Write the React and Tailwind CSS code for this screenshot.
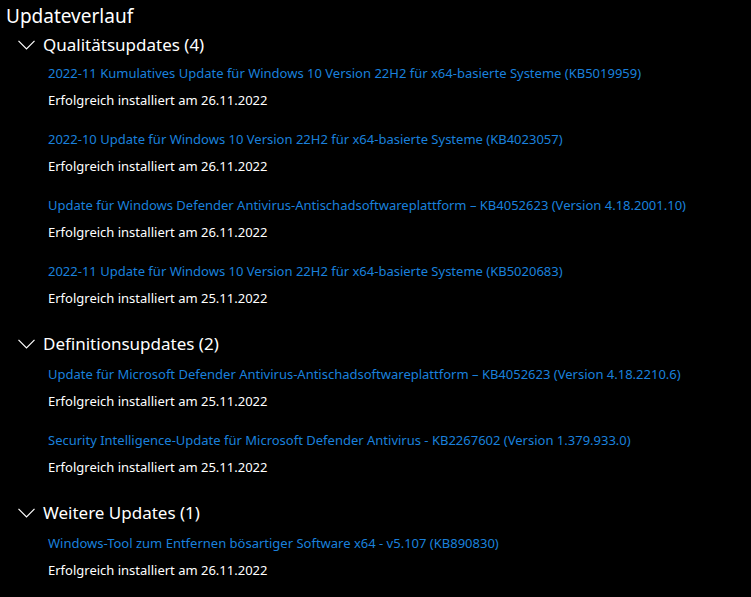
import React from 'react';

const sections = [
  {
    title: 'Qualitätsupdates (4)',
    items: [
      ['2022-11 Kumulatives Update für Windows 10 Version 22H2 für x64-basierte Systeme (KB5019959)', '26.11.2022'],
      ['2022-10 Update für Windows 10 Version 22H2 für x64-basierte Systeme (KB4023057)', '26.11.2022'],
      ['Update für Windows Defender Antivirus-Antischadsoftwareplattform – KB4052623 (Version 4.18.2001.10)', '26.11.2022'],
      ['2022-11 Update für Windows 10 Version 22H2 für x64-basierte Systeme (KB5020683)', '25.11.2022'],
    ],
  },
  {
    title: 'Definitionsupdates (2)',
    items: [
      ['Update für Microsoft Defender Antivirus-Antischadsoftwareplattform – KB4052623 (Version 4.18.2210.6)', '25.11.2022'],
      ['Security Intelligence-Update für Microsoft Defender Antivirus - KB2267602 (Version 1.379.933.0)', '25.11.2022'],
    ],
  },
  {
    title: 'Weitere Updates (1)',
    items: [
      ['Windows-Tool zum Entfernen bösartiger Software x64 - v5.107 (KB890830)', '26.11.2022'],
    ],
  },
];

function Chevron() {
  return (
    <svg width="17" height="10" viewBox="0 0 17 10" className="shrink-0">
      <path d="M0.5 0.8 L8.5 8.8 L16.5 0.8" fill="none" stroke="#ffffff" strokeWidth="1.2" />
    </svg>
  );
}

function Section({ section, first }) {
  return (
    <div className="mb-[19px]">
      {/* Group header */}
      <div className={`flex items-center h-[30px] pl-[18px] ${first ? 'pt-[2px]' : 'pb-[2px]'}`}>
        <Chevron />
        <span className="ml-[8px] text-[17px] text-white">{section.title}</span>
      </div>

      <div className="flex flex-col gap-[12px] pl-[48px]">
        {section.items.map(([name, date]) => (
          <div key={name}>
            <div className="h-[30px] flex items-center text-[13px] text-[#1a80dc] whitespace-nowrap">
              {name}
            </div>
            <div className="h-[24px] flex items-center text-[13px] text-white whitespace-nowrap">
              Erfolgreich installiert am {date}
            </div>
          </div>
        ))}
      </div>
    </div>
  );
}

export default function App() {
  return (
    <div
      className="w-[751px] h-[597px] bg-black overflow-hidden"
      style={{ fontFamily: '"Noto Sans", "Open Sans", sans-serif' }}
    >
      <h1 className="h-[29px] flex items-center pt-[3px] pl-[6px] text-[19px] text-white">Updateverlauf</h1>
      {sections.map((s, i) => (
        <Section key={s.title} section={s} first={i === 0} />
      ))}
    </div>
  );
}
